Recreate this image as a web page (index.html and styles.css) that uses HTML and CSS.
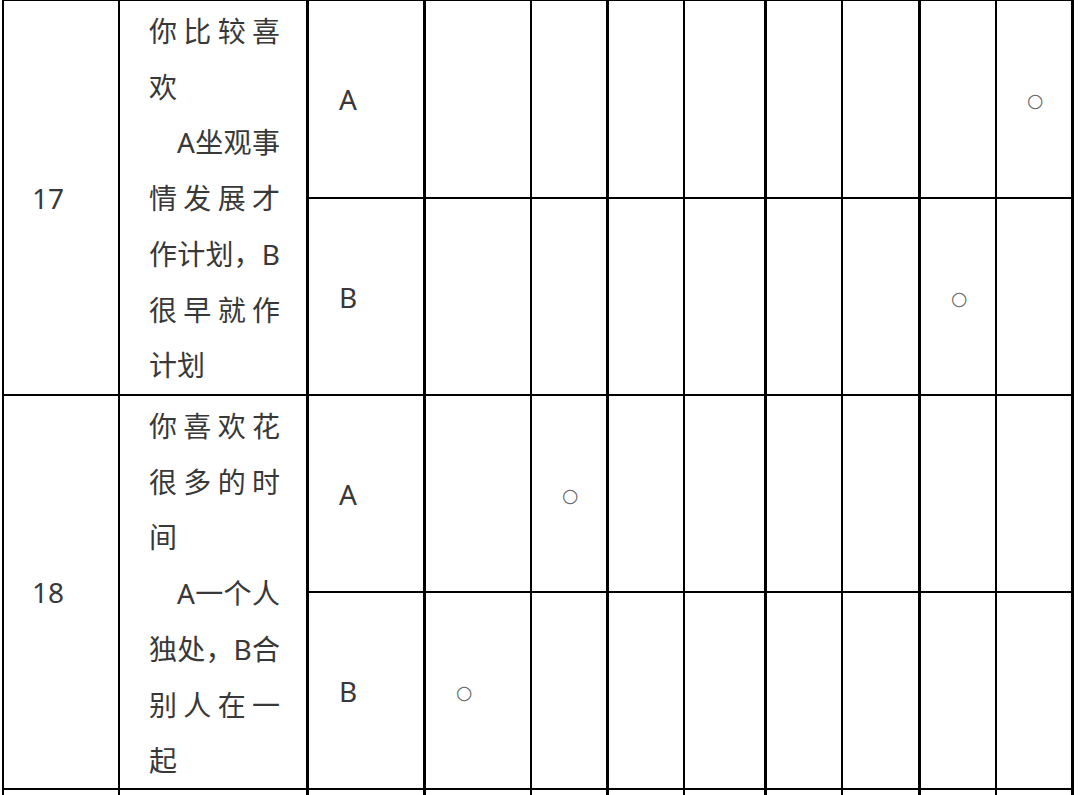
FILE: index.html
```html
<!DOCTYPE html>
<html lang="zh-CN">
<head>
<meta charset="utf-8">
<title>问卷表</title>
<link rel="stylesheet" href="styles.css">
</head>
<body>
<div class="sheet">
  <div class="cell num span2">17</div>
  <div class="cell q span2 k"><div class="qtext"><p>你比较喜欢</p><p class="ind">A坐观事情发展才作计划，B很早就作计划</p></div></div>
  <div class="cell opt k">A</div>
  <div class="cell"></div>
  <div class="cell k"></div>
  <div class="cell"></div>
  <div class="cell k"></div>
  <div class="cell"></div>
  <div class="cell k"></div>
  <div class="cell"></div>
  <div class="cell k"><span class="mark">○</span></div>
  <div class="cell opt k">B</div>
  <div class="cell"></div>
  <div class="cell k"></div>
  <div class="cell"></div>
  <div class="cell k"></div>
  <div class="cell"></div>
  <div class="cell k"></div>
  <div class="cell"><span class="mark">○</span></div>
  <div class="cell k"></div>

  <div class="cell num span2">18</div>
  <div class="cell q span2 k"><div class="qtext"><p>你喜欢花很多的时间</p><p class="ind">A一个人独处，B合别人在一起</p></div></div>
  <div class="cell opt k">A</div>
  <div class="cell"></div>
  <div class="cell k"><span class="mark">○</span></div>
  <div class="cell"></div>
  <div class="cell k"></div>
  <div class="cell"></div>
  <div class="cell k"></div>
  <div class="cell"></div>
  <div class="cell k"></div>
  <div class="cell opt k">B</div>
  <div class="cell"><span class="mark">○</span></div>
  <div class="cell k"></div>
  <div class="cell"></div>
  <div class="cell k"></div>
  <div class="cell"></div>
  <div class="cell k"></div>
  <div class="cell"></div>
  <div class="cell k"></div>

  <div class="cell num"></div>
  <div class="cell q k"></div>
  <div class="cell opt k"></div>
  <div class="cell"></div>
  <div class="cell k"></div>
  <div class="cell"></div>
  <div class="cell k"></div>
  <div class="cell"></div>
  <div class="cell k"></div>
  <div class="cell"></div>
  <div class="cell k"></div>
</div>
</body>
</html>
```

FILE: styles.css
```css
html, body {
  margin: 0;
  padding: 0;
  background: #fff;
  overflow: hidden;
}

body {
  font-family: "Noto Sans", "Noto Sans CJK SC", sans-serif;
  font-size: 28px;
  color: #383838;
}

.sheet {
  display: grid;
  grid-template-columns: 116px 189px 117px 106px 77px 76px 82px 76px 78px 76px 77px;
  grid-template-rows: 198px 197px 197px 197px 197px;
  width: max-content;
  margin: -1px 0 0 2px;
  border-left: 2px solid #000;
  border-top: 2px solid #000;
}

.cell {
  box-sizing: border-box;
  min-width: 0;
  display: flex;
  align-items: center;
  padding-left: 30px;
  line-height: 56px;
  border-right: 2px solid #000;
  border-bottom: 2px solid #000;
}

.k {
  border-right-width: 3px;
}

.span2 {
  grid-row: span 2;
}

.num {
  padding-left: 28px;
}

.q {
  align-items: flex-start;
  padding: 3px 26px 0 29px;
}

.qtext {
  width: 100%;
  line-height: 55.7px;
  text-align: justify;
}

.qtext p {
  margin: 0;
}

.ind {
  text-indent: 1em;
}

.mark {
  position: relative;
  top: 1px;
  font-family: "DejaVu Sans", sans-serif;
  font-size: 19px;
  color: #666;
}
```
